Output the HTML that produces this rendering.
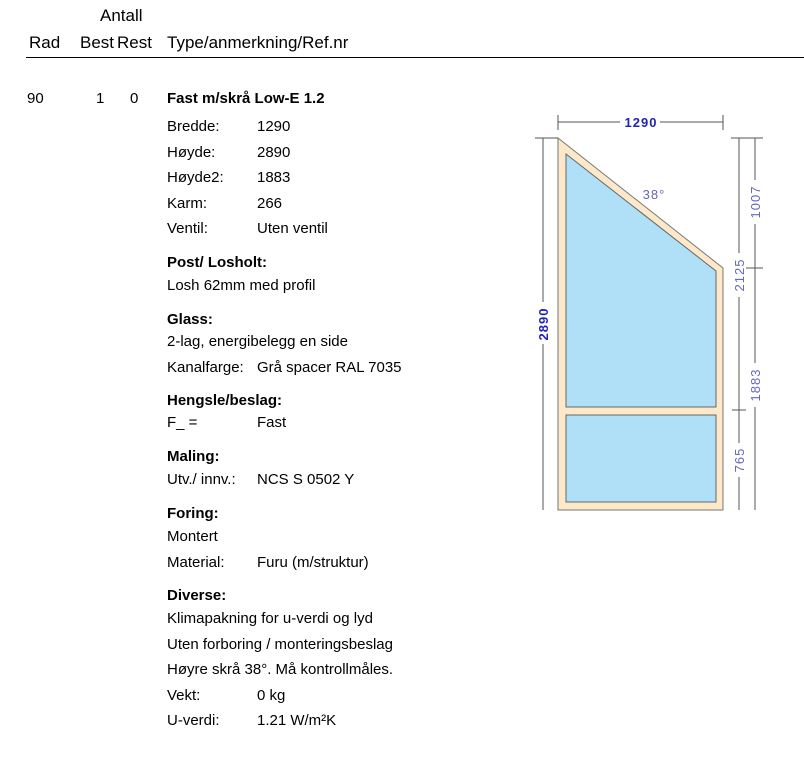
<!DOCTYPE html>
<html><head><meta charset="utf-8"><style>
body{margin:0;width:804px;height:765px;background:#fff;position:relative;overflow:hidden;font-family:"Liberation Sans",Arial,sans-serif;color:#000}
.t{position:absolute;font-size:15px;line-height:20px;white-space:nowrap}
.h{font-size:17px}
b{font-weight:bold}
</style></head><body>
<div class="t h" style="left:100px;top:6px">Antall</div>
<div class="t h" style="left:29px;top:33px">Rad</div>
<div class="t h" style="left:80px;top:33px">Best</div>
<div class="t h" style="left:117px;top:33px">Rest</div>
<div class="t h" style="left:167px;top:33px">Type/anmerkning/Ref.nr</div>
<div style="position:absolute;left:26px;top:57px;width:778px;height:1px;background:#000"></div>

<div class="t" style="left:27px;top:89px">90</div>
<div class="t" style="left:96px;top:89px">1</div>
<div class="t" style="left:130px;top:89px">0</div>
<div class="t" style="left:167px;top:89px"><b>Fast m/skrå Low-E 1.2</b></div>

<div class="t" style="left:167px;top:117px">Bredde:</div><div class="t" style="left:257px;top:117px">1290</div>
<div class="t" style="left:167px;top:143px">Høyde:</div><div class="t" style="left:257px;top:143px">2890</div>
<div class="t" style="left:167px;top:168px">Høyde2:</div><div class="t" style="left:257px;top:168px">1883</div>
<div class="t" style="left:167px;top:194px">Karm:</div><div class="t" style="left:257px;top:194px">266</div>
<div class="t" style="left:167px;top:219px">Ventil:</div><div class="t" style="left:257px;top:219px">Uten ventil</div>
<div class="t" style="left:167px;top:253px"><b>Post/ Losholt:</b></div>
<div class="t" style="left:167px;top:276px">Losh 62mm med profil</div>
<div class="t" style="left:167px;top:310px"><b>Glass:</b></div>
<div class="t" style="left:167px;top:332px">2-lag, energibelegg en side</div>
<div class="t" style="left:167px;top:358px">Kanalfarge:</div><div class="t" style="left:257px;top:358px">Grå spacer RAL 7035</div>
<div class="t" style="left:167px;top:391px"><b>Hengsle/beslag:</b></div>
<div class="t" style="left:167px;top:413px">F_ =</div><div class="t" style="left:257px;top:413px">Fast</div>
<div class="t" style="left:167px;top:447px"><b>Maling:</b></div>
<div class="t" style="left:167px;top:470px">Utv./ innv.:</div><div class="t" style="left:257px;top:470px">NCS S 0502 Y</div>
<div class="t" style="left:167px;top:504px"><b>Foring:</b></div>
<div class="t" style="left:167px;top:527px">Montert</div>
<div class="t" style="left:167px;top:553px">Material:</div><div class="t" style="left:257px;top:553px">Furu (m/struktur)</div>
<div class="t" style="left:167px;top:586px"><b>Diverse:</b></div>
<div class="t" style="left:167px;top:609px">Klimapakning for u-verdi og lyd</div>
<div class="t" style="left:167px;top:635px">Uten forboring / monteringsbeslag</div>
<div class="t" style="left:167px;top:660px">Høyre skrå 38°. Må kontrollmåles.</div>
<div class="t" style="left:167px;top:686px">Vekt:</div><div class="t" style="left:257px;top:686px">0 kg</div>
<div class="t" style="left:167px;top:711px">U-verdi:</div><div class="t" style="left:257px;top:711px">1.21 W/m²K</div>

<svg style="position:absolute;left:0;top:0" width="804" height="765" font-family="Liberation Sans,Arial,sans-serif">
<g stroke="#555" stroke-width="1" fill="none">
<line x1="558" y1="122" x2="723" y2="122"/><line x1="558" y1="115" x2="558" y2="130"/><line x1="723" y1="115" x2="723" y2="130"/>
<line x1="543" y1="138" x2="543" y2="510"/><line x1="535" y1="138" x2="558" y2="138"/>
<line x1="739" y1="138" x2="739" y2="510"/><line x1="755" y1="138" x2="755" y2="510"/>
<line x1="731" y1="138" x2="763" y2="138"/><line x1="739" y1="268" x2="763" y2="268"/><line x1="732" y1="410" x2="746" y2="410"/>
</g>
<polygon points="558,138 723,268 723,510 558,510" fill="#fde9c9" stroke="#777" stroke-width="1"/>
<polygon points="566,154 716,271 716,407 566,407" fill="#b0dff8" stroke="#666" stroke-width="1"/>
<rect x="566" y="415" width="150" height="87" fill="#b0dff8" stroke="#666" stroke-width="1"/>
<g font-size="13" font-weight="bold" fill="#2222bb" letter-spacing="1">
<rect x="620" y="115" width="40" height="14" fill="#fff"/>
<text x="641" y="127" text-anchor="middle">1290</text>
<rect x="536" y="302" width="14" height="42" fill="#fff"/>
<text transform="translate(548,324) rotate(-90)" text-anchor="middle">2890</text>
</g>
<g font-size="13" fill="#6666bb" text-anchor="middle" letter-spacing="1">
<text x="654" y="199">38°</text>
<rect x="748" y="180" width="14" height="44" fill="#fff"/>
<text transform="translate(760,202) rotate(-90)">1007</text>
<rect x="732" y="253" width="14" height="44" fill="#fff"/>
<text transform="translate(744,275) rotate(-90)">2125</text>
<rect x="748" y="363" width="14" height="44" fill="#fff"/>
<text transform="translate(760,385) rotate(-90)">1883</text>
<rect x="732" y="443" width="14" height="34" fill="#fff"/>
<text transform="translate(744,460) rotate(-90)">765</text>
</g>
</svg>
</body></html>
